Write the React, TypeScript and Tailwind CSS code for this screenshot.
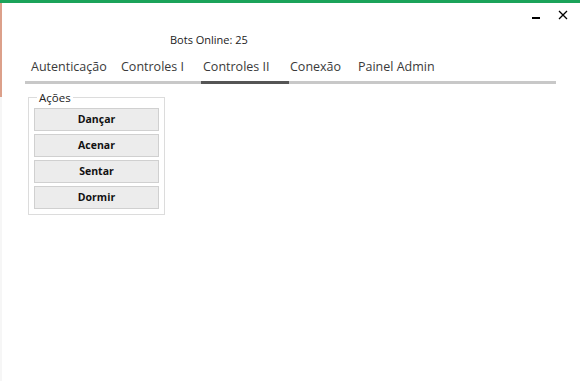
import { useState } from 'react';

const tabs = [
  { label: 'Autenticação', w: 'w-[92px]', pl: 'pl-[6px]' },
  { label: 'Controles I', w: 'w-[84px]', pl: 'pl-[4px]' },
  { label: 'Controles II', w: 'w-[88px]', pl: 'pl-[2px]' },
  { label: 'Conexão', w: 'w-[66px]', pl: 'pl-[1px]' },
  { label: 'Painel Admin', w: 'w-[90px]', pl: 'pl-[3px]' },
];

const actions = ['Dançar', 'Acenar', 'Sentar', 'Dormir'];

export default function App() {
  const [active, setActive] = useState(2);

  return (
    <div className="w-[580px] h-[381px] bg-white flex flex-col font-['Open_Sans',sans-serif] text-[#333] overflow-hidden">
      {/* Green window accent */}
      <div className="h-[3px] bg-[#1ba35a] shrink-0" />

      <div className="flex flex-1 min-h-0">
        {/* Stray left edge from window behind */}
        <div className="w-[2px] flex flex-col">
          <div className="h-[94px] bg-[#dca08a]" />
          <div className="flex-1 bg-[#f6f6f6]" />
        </div>

        <div className="flex-1 flex flex-col">
          {/* Window controls */}
          <div className="h-[22px] flex items-start justify-end pr-[12px] gap-[18px] text-black">
            <span className="mt-[14px] w-[8px] h-[2px] bg-black" />
            <svg width="10" height="10" viewBox="0 0 10 10" className="mt-[7px]">
              <path d="M1 1 L9 9 M9 1 L1 9" stroke="black" strokeWidth="1.3" />
            </svg>
          </div>

          {/* Status */}
          <div className="h-[32px] pl-[168px] pt-[8px] text-[11px] leading-[13px] text-[#222]">
            Bots Online: 25
          </div>

          {/* Tabs */}
          <div className="ml-[23px] w-[531px] flex">
            {tabs.map((t, i) => (
              <button
                key={t.label}
                onClick={() => setActive(i)}
                className={`${t.w} ${t.pl} text-left text-[12.5px] leading-[18px] pt-[1px] pb-[5px] border-b-[3px] ${
                  i === active ? 'border-[#555]' : 'border-[#c8c8c8]'
                } text-[#3a3a3a]`}
              >
                {t.label}
              </button>
            ))}
            <div className="flex-1 border-b-[3px] border-[#c8c8c8]" />
          </div>

          {/* Content */}
          <div className="pl-[26px] pt-[7px]">
            <fieldset className="w-[137px] border border-[#dcdcdc] px-[5px] pt-[4px] pb-[5px] flex flex-col gap-[3px]">
              <legend className="ml-[3px] px-[2px] text-[11.5px] leading-[13px] text-[#222]">Ações</legend>
              {actions.map((a) => (
                <button
                  key={a}
                  className="h-[23px] w-full bg-[#ececec] border border-[#d0d0d0] text-[10.5px] font-bold text-[#111]"
                >
                  {a}
                </button>
              ))}
            </fieldset>
          </div>
        </div>
      </div>
    </div>
  );
}
